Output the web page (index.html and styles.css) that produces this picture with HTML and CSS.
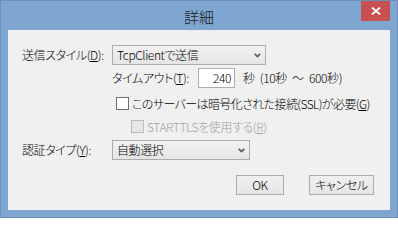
FILE: index.html
```html
<!DOCTYPE html>
<html lang="ja">
<head>
<meta charset="utf-8">
<title>詳細</title>
<link rel="stylesheet" href="styles.css">
</head>
<body>
<div class="window">
  <div class="titlebar">
    <span class="title">詳細</span>
    <div class="close">
      <svg width="10" height="8" viewBox="0 0 10 8"><path d="M1 0.5 L9 7.5 M9 0.5 L1 7.5" stroke="#fff" stroke-width="1.8" fill="none"/></svg>
    </div>
  </div>
  <div class="client">
    <div class="row">
      <span class="label">送信スタイル(<u>D</u>):</span>
      <div class="combo combo-wide"><span>TcpClientで送信</span><svg class="arrow" width="7" height="5" viewBox="0 0 7 5"><path d="M0.7 0.7 L3.5 3.6 L6.3 0.7" stroke="#555" stroke-width="1.6" fill="none"/></svg></div>
    </div>
    <div class="row row-timeout">
      <span class="label label-timeout">タイムアウト(<u>T</u>):</span>
      <div class="edit">240</div>
      <span class="unit">秒 (10秒 ～ 600秒)</span>
    </div>
    <div class="row row-check">
      <span class="checkbox"></span>
      <span class="check-text">このサーバーは暗号化された接続(SSL)が必要(<u>G</u>)</span>
    </div>
    <div class="row row-check row-sub">
      <span class="checkbox disabled"></span>
      <span class="check-text disabled-text">STARTTLSを使用する(<u>R</u>)</span>
    </div>
    <div class="row row-auth">
      <span class="label">認証タイプ(<u>Y</u>):</span>
      <div class="combo combo-narrow"><span>自動選択</span><svg class="arrow" width="7" height="5" viewBox="0 0 7 5"><path d="M0.7 0.7 L3.5 3.6 L6.3 0.7" stroke="#555" stroke-width="1.6" fill="none"/></svg></div>
    </div>
    <div class="row row-buttons">
      <div class="button btn-ok">OK</div>
      <div class="button btn-cancel">キャンセル</div>
    </div>
  </div>
</div>
</body>
</html>
```
FILE: styles.css
```css
html, body {
  margin: 0;
  padding: 0;
}
body {
  font-family: "Noto Sans CJK JP", "Noto Sans", sans-serif;
  font-feature-settings: "palt" 1;
  font-size: 12px;
  font-weight: 300;
  letter-spacing: -0.4px;
  color: #000;
}
.window {
  width: 398px;
  height: 218px;
  box-sizing: border-box;
  border: 1px solid #6b90b9;
  background: #7fa6d0;
  padding: 0 7px 7px 7px;
  display: flex;
  flex-direction: column;
}
.titlebar {
  height: 29px;
  display: grid;
  grid-template-columns: 1fr auto 1fr;
  flex: none;
}
.title {
  grid-column: 2;
  font-size: 15px;
  line-height: 31px;
  letter-spacing: 0;
  color: #1a1a1a;
}
.close {
  grid-column: 3;
  justify-self: end;
  align-self: start;
  width: 29px;
  height: 20px;
  background: #c75050;
  display: flex;
  align-items: center;
  justify-content: center;
}
.close svg {
  display: block;
}
.client {
  flex: 1;
  background: #f0f0f0;
  padding: 15px 16px 0 14px;
  display: flex;
  flex-direction: column;
}
.row {
  display: flex;
  align-items: center;
  height: 20px;
  line-height: 1;
}
.label {
  width: 90px;
  flex: none;
  white-space: nowrap;
}
.combo {
  height: 20px;
  box-sizing: border-box;
  border: 1px solid #acacac;
  background: linear-gradient(#f2f2f2, #e5e5e5);
  display: flex;
  align-items: center;
  justify-content: space-between;
  padding: 0 4px 0 4px;
}
.combo-wide {
  width: 154px;
}
.combo-narrow {
  width: 138px;
}
.arrow {
  display: block;
}
.row-timeout {
  margin-top: 3px;
  padding-left: 90px;
}
.label-timeout {
  width: 86px;
}
.edit {
  width: 37px;
  height: 20px;
  box-sizing: border-box;
  border: 1px solid #abadb3;
  background: #fff;
  text-align: right;
  padding-right: 3px;
  line-height: 18px;
}
.unit {
  margin-left: 8px;
  word-spacing: 3px;
  white-space: pre;
}
.row-check {
  height: 13px;
  margin-top: 9px;
  padding-left: 94px;
}
.row-sub {
  margin-top: 10px;
  padding-left: 109px;
}
.checkbox {
  width: 13px;
  height: 13px;
  box-sizing: border-box;
  border: 1px solid #707070;
  background: #fff;
  flex: none;
}
.checkbox.disabled {
  border-color: #bcbcbc;
  background: #e6e6e6;
}
.check-text {
  margin-left: 3px;
  white-space: nowrap;
  letter-spacing: -0.6px;
}
.disabled-text {
  color: #a0a0a0;
  letter-spacing: -0.4px;
}
.row-auth {
  margin-top: 7px;
}
.row-buttons {
  margin-top: 15px;
  justify-content: flex-end;
  gap: 25px;
}
.button {
  height: 20px;
  box-sizing: border-box;
  border: 1px solid #acacac;
  background: linear-gradient(#f0f0f0, #e5e5e5);
  display: flex;
  align-items: center;
  justify-content: center;
}
.btn-ok {
  width: 48px;
}
.btn-cancel {
  width: 65px;
}
```
